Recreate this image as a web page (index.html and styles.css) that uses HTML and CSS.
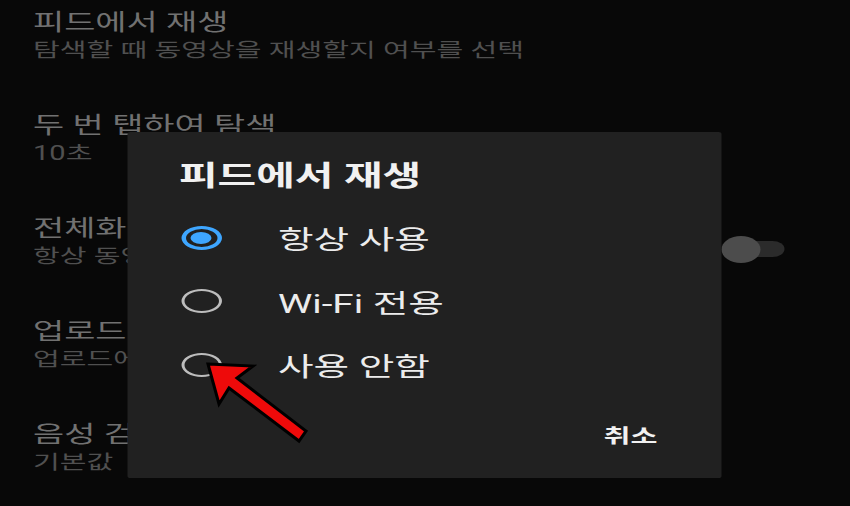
FILE: index.html
```html
<!DOCTYPE html>
<html lang="ko">
<head>
    <meta charset="UTF-8">
    <meta name="viewport" content="width=device-width, initial-scale=1.0">
    <title>피드에서 재생</title>
    <link rel="stylesheet" href="styles.css">
</head>
<body>
    <div class="screen">
        <ul class="settings">
            <li class="item">
                <div class="item-title">피드에서 재생</div>
                <div class="item-sub">탐색할 때 동영상을 재생할지 여부를 선택</div>
            </li>
            <li class="item">
                <div class="item-title">두 번 탭하여 탐색</div>
                <div class="item-sub">10초</div>
            </li>
            <li class="item item-switch">
                <div>
                    <div class="item-title">전체화면</div>
                    <div class="item-sub">항상 동영상</div>
                </div>
                <div class="toggle"><span class="thumb"></span></div>
            </li>
            <li class="item">
                <div class="item-title">업로드</div>
                <div class="item-sub">업로드에</div>
            </li>
            <li class="item">
                <div class="item-title">음성 검색</div>
                <div class="item-sub">기본값</div>
            </li>
        </ul>

        <div class="dialog">
            <h2 class="dialog-title">피드에서 재생</h2>
            <div class="options">
                <div class="option">
                    <span class="radio checked"><span class="dot"></span></span>
                    <span class="label">항상 사용</span>
                </div>
                <div class="option">
                    <span class="radio"></span>
                    <span class="label">Wi-Fi 전용</span>
                </div>
                <div class="option">
                    <span class="radio"></span>
                    <span class="label">사용 안함</span>
                </div>
            </div>
            <div class="actions">
                <span class="btn">취소</span>
            </div>
        </div>
    </div>

    <!-- red pointer drawn over the screenshot -->
    <svg class="arrow" width="850" height="506" viewBox="0 0 850 506">
        <polygon points="208,364 253,366 237,378 306,431 299,441 229,388 219,404"
                 fill="#ee0a0a" stroke="#000" stroke-width="3" stroke-linejoin="miter"/>
    </svg>
</body>
</html>
```

FILE: styles.css
```css
body {
    margin: 0;
    background: #080808;
    font-family: Roboto, "Noto Sans CJK KR", sans-serif;
    overflow: hidden;
}

/* the phone capture is stretched sideways, so lay out narrow and widen */
.screen {
    position: relative;
    width: 567px;
    height: 506px;
    transform: scaleX(1.5);
    transform-origin: 0 0;
}

.settings {
    list-style: none;
    margin: 0;
    padding: 8px 0 0 22px;
}

.item {
    height: 103px;
}

.item-switch {
    display: flex;
    justify-content: space-between;
    align-items: flex-start;
}

.item-title {
    font-size: 22.6px;
    line-height: 29px;
    color: #717171;
}

.item-sub {
    font-size: 19.4px;
    line-height: 28px;
    color: #505050;
}

.toggle {
    display: flex;
    align-items: center;
    width: 38px;
    height: 16px;
    margin: 27px 44px 0 0;
    background: #2b2b2b;
    border-radius: 8px;
}

.thumb {
    width: 26px;
    height: 27px;
    margin-left: -4px;
    border-radius: 50%;
    background: #4c4c4c;
}

.dialog {
    position: absolute;
    left: 84.7px;
    top: 132px;
    width: 396.6px;
    height: 346px;
    box-sizing: border-box;
    padding: 29px 43px 21px 34.6px;
    display: flex;
    flex-direction: column;
    background: #212121;
    border-radius: 2px;
}

.dialog-title {
    margin: 0;
    font-size: 28px;
    line-height: 32px;
    font-weight: bold;
    color: #f1f1f1;
}

.options {
    margin-top: 13px;
}

.option {
    display: flex;
    align-items: center;
    height: 63.5px;
}

.radio {
    display: flex;
    align-items: center;
    justify-content: center;
    box-sizing: border-box;
    width: 27px;
    height: 24px;
    margin-left: 1.7px;
    margin-right: 37.3px;
    border: 2.5px solid #bdbdbd;
    border-radius: 50%;
}

.radio.checked {
    border: 3px solid #3ea6ff;
}

.dot {
    width: 14px;
    height: 12px;
    border-radius: 50%;
    background: #3ea6ff;
}

.label {
    font-size: 25.8px;
    color: #ececec;
}

.actions {
    margin-top: auto;
    display: flex;
    justify-content: flex-end;
}

.btn {
    font-size: 19.5px;
    line-height: 40px;
    font-weight: bold;
    color: #f1f1f1;
}

.arrow {
    position: absolute;
    left: 0;
    top: 0;
    pointer-events: none;
}
```
